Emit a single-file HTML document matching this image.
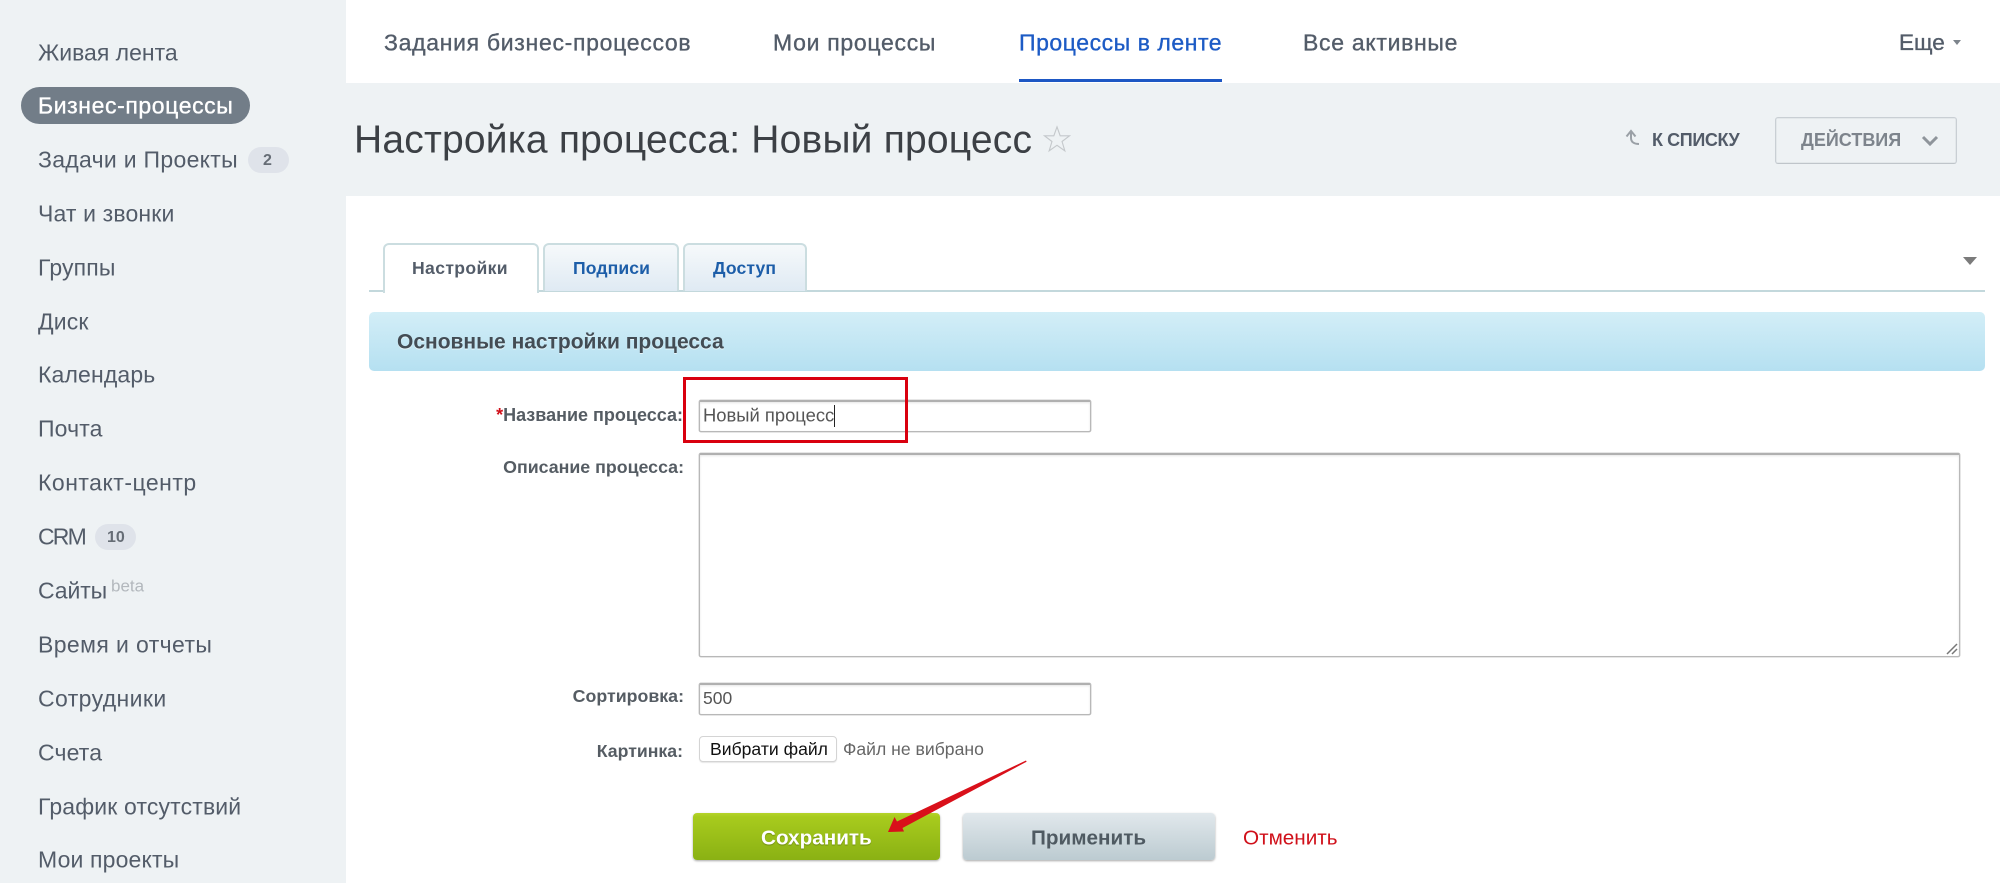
<!DOCTYPE html>
<html lang="ru"><head><meta charset="utf-8"><title>Настройка процесса</title>
<style>
html,body{margin:0;padding:0;width:2000px;height:883px;overflow:hidden;background:#fff}
body{position:relative;font-family:"Liberation Sans",Arial,sans-serif}
.a{position:absolute;box-sizing:border-box}
.t{position:absolute;white-space:nowrap;line-height:1;transform:translateY(-45%)}
.side{position:absolute;left:0;top:0;width:346px;height:883px;background:#eef2f4}
.s{left:38px;font-size:23px;color:#535c69;letter-spacing:.15px}
.n{font-size:23px;color:#535c69;-webkit-text-stroke:.35px currentColor;top:42px;letter-spacing:.7px}
.tab{top:243px;height:48px;border:2px solid #cbdde0;border-bottom:none;border-radius:6px 6px 0 0;background:linear-gradient(#f6f9fb,#dfeaf3)}
.l{font-size:18px;font-weight:bold;color:#555c63}
.i{border:1px solid #b8b8b8;border-top:2px solid #b0b0b0;border-radius:2px;background:#fff;box-shadow:inset 0 1px 2px rgba(0,0,0,.1),0 0 0 .5px #ccc}
.b{font-size:20.7px;font-weight:bold}
</style></head><body>
<nav class="side"></nav>
<div class="a" style="left:21px;top:87px;width:229px;height:37px;border-radius:19px;background:#727d88"></div>
<a class="t s" style="top:52px;letter-spacing:0">Живая лента</a>
<a class="t s" style="top:105px;color:#fff;-webkit-text-stroke:.35px #fff;letter-spacing:.6px">Бизнес-процессы</a>
<a class="t s" style="top:159px;letter-spacing:.3px">Задачи и Проекты</a>
<div class="a" style="left:248px;top:147px;width:41px;height:26px;border-radius:13px;background:#dfe3ea"></div>
<span class="t" style="left:263px;top:160px;font-size:16px;font-weight:bold;color:#666d76">2</span>
<a class="t s" style="top:213px">Чат и звонки</a>
<a class="t s" style="top:267px">Группы</a>
<a class="t s" style="top:321px">Диск</a>
<a class="t s" style="top:374px">Календарь</a>
<a class="t s" style="top:428px">Почта</a>
<a class="t s" style="top:482px;letter-spacing:.5px">Контакт-центр</a>
<a class="t s" style="top:536px;letter-spacing:-1.8px">CRM</a>
<div class="a" style="left:95px;top:524px;width:41px;height:26px;border-radius:13px;background:#dfe3ea"></div>
<span class="t" style="left:107px;top:537px;font-size:16px;font-weight:bold;color:#666d76">10</span>
<a class="t s" style="top:590px;letter-spacing:-.1px">Сайты</a>
<span class="t" style="left:111px;top:585px;font-size:17px;color:#b3b8bd">beta</span>
<a class="t s" style="top:644px;letter-spacing:.4px">Время и отчеты</a>
<a class="t s" style="top:698px;letter-spacing:.4px">Сотрудники</a>
<a class="t s" style="top:752px">Счета</a>
<a class="t s" style="top:806px">График отсутствий</a>
<a class="t s" style="top:859px">Мои проекты</a>

<a class="t n" style="left:384px">Задания бизнес-процессов</a>
<a class="t n" style="left:773px">Мои процессы</a>
<a class="t n" style="left:1019px;color:#1d5bc5;letter-spacing:.55px">Процессы в ленте</a>
<a class="t n" style="left:1303px">Все активные</a>
<a class="t n" style="left:1899px;letter-spacing:0;font-size:22.5px">Еще</a>
<div class="a" style="left:1953px;top:40px;width:0;height:0;border:4px solid transparent;border-top:5px solid #7d848c;border-bottom:none"></div>
<div class="a" style="left:1019px;top:79px;width:203px;height:3px;background:#1d57c4"></div>

<div class="a" style="left:346px;top:83px;width:1654px;height:113px;background:#eef2f4"></div>
<h1 class="t" style="margin:0;left:354px;top:138px;font-size:39px;font-weight:normal;color:#3c4045;letter-spacing:.2px">Настройка процесса: Новый процесс</h1>
<svg class="a" style="left:1043px;top:125px" width="28" height="28" viewBox="0 0 30 30"><path d="M15 2l3.4 9.6h10l-8 6.1 3 10L15 21.8l-8.4 5.9 3-10-8-6.1h10z" fill="none" stroke="#c4c8cb" stroke-width="1.2"/></svg>
<svg class="a" style="left:1624px;top:128px" width="22" height="22" viewBox="0 0 22 22"><path d="M7 4v6c0 4 3 6 8 6" fill="none" stroke="#9aa0a6" stroke-width="2"/><path d="M2.5 8.5L7 3l4.5 5.5" fill="none" stroke="#9aa0a6" stroke-width="2"/></svg>
<a class="t" style="left:1652px;top:139px;font-size:18px;font-weight:bold;color:#535c69;letter-spacing:-.4px">К СПИСКУ</a>
<div class="a" style="left:1775px;top:117px;width:182px;height:47px;border:1px solid #c9cfd4;border-bottom-color:#bfc5ca;border-radius:3px;box-shadow:inset 0 0 0 .5px #d8dde1"></div>
<span class="t" style="left:1801px;top:139px;font-size:18px;font-weight:bold;color:#7d848c">ДЕЙСТВИЯ</span>
<svg class="a" style="left:1921px;top:134px" width="18" height="14" viewBox="0 0 18 14"><path d="M2 3l7 7 7-7" fill="none" stroke="#8f959b" stroke-width="3"/></svg>

<div class="a" style="left:369px;top:290px;width:1616px;height:2px;background:#c3d8dc"></div>
<div class="a tab" style="left:383px;width:156px;height:50px;background:#fff;z-index:2"></div>
<div class="a tab" style="left:543px;width:136px"></div>
<div class="a tab" style="left:683px;width:124px"></div>
<span class="t" style="left:412px;top:268px;font-size:17.6px;font-weight:bold;color:#535c69;z-index:3;letter-spacing:.35px">Настройки</span>
<span class="t" style="left:573px;top:268px;font-size:17.6px;font-weight:bold;color:#1d5ea9;letter-spacing:.1px">Подписи</span>
<span class="t" style="left:713px;top:268px;font-size:17.6px;font-weight:bold;color:#1d5ea9;letter-spacing:.1px">Доступ</span>
<div class="a" style="left:1963px;top:257px;width:0;height:0;border:7.5px solid transparent;border-top:8px solid #7b7b7b;border-bottom:none"></div>

<div class="a" style="left:369px;top:312px;width:1616px;height:59px;border-radius:5px;background:linear-gradient(#d3eef7,#b5e0f1)"></div>
<span class="t" style="left:397px;top:341px;font-size:21px;font-weight:bold;color:#434c54;text-shadow:0 1px 0 rgba(255,255,255,.6)">Основные настройки процесса</span>

<span class="t l" style="right:1317px;top:414px"><span style="color:#d0101a">*</span>Название процесса:</span>
<div class="a i" style="left:699px;top:400px;width:392px;height:32px"></div>
<span class="t" style="left:703px;top:415px;font-size:18.4px;color:#555">Новый процесс</span>
<div class="a" style="left:834px;top:405px;width:1px;height:22px;background:#222"></div>
<div class="a" style="left:683px;top:377px;width:225px;height:66px;border:3px solid #d9000f"></div>

<span class="t l" style="right:1316px;top:467px;font-size:17.8px">Описание процесса:</span>
<div class="a i" style="left:699px;top:453px;width:1261px;height:204px"></div>
<svg class="a" style="left:1946px;top:642px" width="12" height="13" viewBox="0 0 12 13"><path d="M1 12L11 2M6 12l5-5" stroke="#777" stroke-width="1.5"/></svg>

<span class="t l" style="right:1316px;top:696px;font-size:17.8px">Сортировка:</span>
<div class="a i" style="left:699px;top:683px;width:392px;height:32px"></div>
<span class="t" style="left:703px;top:698px;font-size:17.5px;color:#555">500</span>

<span class="t l" style="right:1317px;top:751px;font-size:17.7px">Картинка:</span>
<div class="a" style="left:699px;top:736px;width:138px;height:26px;background:#fff;border:1px solid #d4d4d4;border-radius:4px;box-shadow:0 1px 1px rgba(0,0,0,.1)"></div>
<span class="t" style="left:710px;top:749px;font-size:17.6px;color:#111">Вибрати файл</span>
<span class="t" style="left:843px;top:749px;font-size:17.6px;color:#666">Файл не вибрано</span>

<div class="a" style="left:693px;top:813px;width:247px;height:47px;border-radius:4px;background:linear-gradient(#b5d42a 0,#a8cb1d 8%,#8ab114 100%);box-shadow:0 1px 2px rgba(0,0,0,.35)"></div>
<span class="t b" style="left:761px;top:838px;color:#fff;text-shadow:0 1px 1px rgba(0,0,0,.25)">Сохранить</span>
<div class="a" style="left:963px;top:813px;width:252px;height:47px;border-radius:4px;background:linear-gradient(#e1e8ec,#bccbd1);box-shadow:0 1px 2px rgba(0,0,0,.35)"></div>
<span class="t b" style="left:1031px;top:838px;color:#4f5a62">Применить</span>
<a class="t" style="left:1243px;top:838px;font-size:20.7px;color:#d0101a">Отменить</a>

<svg class="a" style="left:880px;top:755px" width="155" height="85" viewBox="880 755 155 85"><path d="M1026 760.5l.6 1.2L902.5 828l1.5 3.5L888 832l6.5-15 2.5 4.5z" fill="#d9101a"/></svg>
</body></html>
